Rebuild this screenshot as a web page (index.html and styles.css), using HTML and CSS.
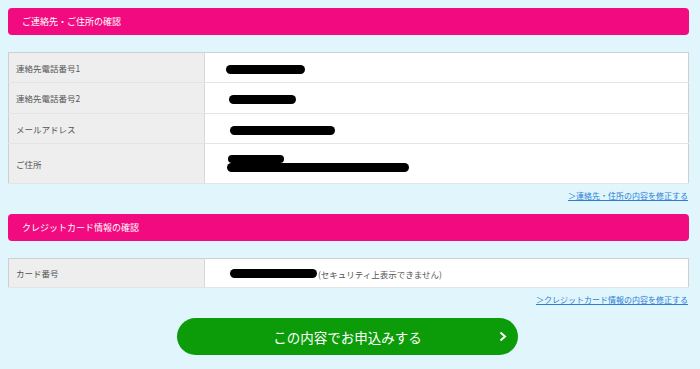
FILE: index.html
```html
<!DOCTYPE html>
<html lang="ja">
<head>
<meta charset="utf-8">
<link rel="stylesheet" href="styles.css">
</head>
<body>
<div class="page">
  <h2 class="sec-head">ご連絡先・ご住所の確認</h2>
  <table class="info">
    <tr class="r30"><th>連絡先電話番号1</th><td><span class="mask" style="width:79px;margin-left:21px"></span></td></tr>
    <tr class="r31"><th>連絡先電話番号2</th><td><span class="mask" style="width:67px;margin-left:24px"></span></td></tr>
    <tr class="r30"><th>メールアドレス</th><td><span class="mask" style="width:105px;margin-left:25px"></span></td></tr>
    <tr class="r40"><th>ご住所</th><td>
      <div class="addr">
        <span class="mask" style="width:56px;margin-left:23px"></span>
        <span class="mask" style="width:182px;margin-left:22px"></span>
      </div>
    </td></tr>
  </table>
  <div class="fix"><a href="#">＞連絡先・住所の内容を修正する</a></div>

  <h2 class="sec-head sec2">クレジットカード情報の確認</h2>
  <table class="info">
    <tr class="r29"><th>カード番号</th><td><span class="mask" style="width:87px;margin-left:25px"></span><span class="note">(セキュリティ上表示できません)</span></td></tr>
  </table>
  <div class="fix"><a href="#">＞クレジットカード情報の内容を修正する</a></div>

  <div class="submit-wrap">
    <a class="submit" href="#">この内容でお申込みする
      <svg class="chev" width="8" height="11" viewBox="0 0 8 11"><path d="M1.5 1.5 L6 5.5 L1.5 9.5" fill="none" stroke="#fff" stroke-width="2"/></svg>
    </a>
  </div>
</div>
</body>
</html>
```
FILE: styles.css
```css
html, body {
  margin: 0;
  padding: 0;
}
body {
  background: #e1f5fd;
  font-family: "Noto Sans CJK JP", "Noto Sans", sans-serif;
  color: #333;
  width: 700px;
  height: 369px;
  overflow: hidden;
}
.page {
  padding: 8px 11px 0 8px;
}
.sec-head {
  margin: 0;
  height: 27px;
  background: #f20a80;
  border-radius: 4px;
  color: #fff;
  font-size: 9px;
  font-weight: normal;
  line-height: 27px;
  padding-left: 14px;
}
.sec2 {
  margin-top: 12px;
}
.info {
  width: 681px;
  border-collapse: collapse;
  margin-top: 17px;
  background: #fff;
  border: 1px solid #cfcfcf;
}
.info th {
  width: 188px;
  background: #eeeeee;
  border-right: 1px solid #d8d8d8;
  border-bottom: 1px solid #e4e4e4;
  text-align: left;
  font-weight: normal;
  font-size: 8.5px;
  color: #555;
  padding: 0 0 0 7px;
}
.info td {
  border-bottom: 1px solid #e4e4e4;
  padding: 0;
  font-size: 8.5px;
  color: #555;
}
.r29 { height: 29px; }
.r30 { height: 30px; }
.r31 { height: 31px; }
.r40 { height: 40px; }
.mask {
  display: inline-block;
  height: 9px;
  background: #000;
  border-radius: 5px;
  vertical-align: middle;
}
.addr {
  display: flex;
  flex-direction: column;
}
.addr .mask {
  display: block;
  height: 9px;
}
.addr .mask:first-child {
  height: 8px;
}
.note {
  vertical-align: middle;
  margin-left: 1px;
}
.fix {
  text-align: right;
  font-size: 8px;
  line-height: 12px;
  margin-top: 6px;
  padding-right: 1px;
}
.fix a {
  color: #2a7fd4;
  text-decoration: underline;
}
.submit-wrap {
  display: flex;
  justify-content: center;
  margin-top: 12px;
  padding-right: 2px;
}
.submit {
  position: relative;
  display: flex;
  align-items: center;
  justify-content: center;
  width: 341px;
  height: 37px;
  border-radius: 19px;
  background: #0c9c0a;
  color: #fff;
  font-size: 13.5px;
  text-decoration: none;
}
.chev {
  position: absolute;
  right: 11px;
  top: 13px;
}
```
